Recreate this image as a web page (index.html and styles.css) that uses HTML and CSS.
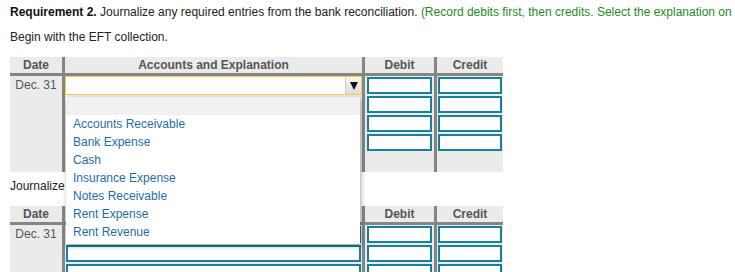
FILE: index.html
```html
<!DOCTYPE html>
<html>
<head>
<meta charset="utf-8">
<link rel="stylesheet" href="styles.css">
</head>
<body>
<div class="page">
  <p class="title"><b>Requirement 2.</b> Journalize any required entries from the bank reconciliation. <span class="hint">(Record debits first, then credits. Select the explanation on the last line of the journal entry table.)</span></p>
  <p class="begin">Begin with the EFT collection.</p>

  <div class="jt first">
    <div class="jt-head">
      <div class="c date">Date</div>
      <div class="c acct">Accounts and Explanation</div>
      <div class="c dr">Debit</div>
      <div class="c cr">Credit</div>
    </div>
    <div class="jt-body">
      <div class="col date"><div class="dtext">Dec. 31</div></div>
      <div class="col acct">
        <div class="select-wrap">
          <div class="select"><span class="arrow-btn"><span class="tri"></span></span></div>
          <div class="dropdown">
            <div class="opt blank"></div>
            <div class="opt">Accounts Receivable</div>
            <div class="opt">Bank Expense</div>
            <div class="opt">Cash</div>
            <div class="opt">Insurance Expense</div>
            <div class="opt">Notes Receivable</div>
            <div class="opt">Rent Expense</div>
            <div class="opt">Rent Revenue</div>
          </div>
        </div>
      </div>
      <div class="col dr">
        <div class="inp"></div><div class="inp"></div><div class="inp"></div><div class="inp"></div>
      </div>
      <div class="col cr">
        <div class="inp"></div><div class="inp"></div><div class="inp"></div><div class="inp"></div>
      </div>
    </div>
  </div>

  <p class="jz">Journalize the service charge.</p>

  <div class="jt second">
    <div class="jt-head">
      <div class="c date">Date</div>
      <div class="c acct">Accounts and Explanation</div>
      <div class="c dr">Debit</div>
      <div class="c cr">Credit</div>
    </div>
    <div class="jt-body">
      <div class="col date"><div class="dtext">Dec. 31</div></div>
      <div class="col acct">
        <div class="inp"></div><div class="inp"></div><div class="inp"></div>
      </div>
      <div class="col dr">
        <div class="inp"></div><div class="inp"></div><div class="inp"></div>
      </div>
      <div class="col cr">
        <div class="inp"></div><div class="inp"></div><div class="inp"></div>
      </div>
    </div>
  </div>
</div>
</body>
</html>
```

FILE: styles.css
```css
html, body {
  margin: 0;
  padding: 0;
  background: #fff;
  overflow: hidden;
}
body {
  font-family: "Liberation Sans", Arial, sans-serif;
  font-size: 12px;
  line-height: 16px;
  color: #222;
}
.page {
  padding: 4px 0 0 10px;
  width: 725px;
  overflow: hidden;
}
p {
  margin: 0;
}
.title {
  white-space: nowrap;
  overflow: hidden;
}
.title b {
  font-weight: bold;
  color: #111;
}
.hint {
  color: #1e8a1e;
}
.begin {
  margin-top: 9px;
}
.jz {
  margin-top: 6px;
}
.jt {
  width: 493px;
}
.jt.first {
  margin-top: 12px;
}
.jt.second {
  margin-top: 12px;
}
.jt-head {
  display: flex;
  height: 16px;
  background: #ebebeb;
  border-bottom: 3px solid #858585;
  color: #555;
  font-weight: bold;
}
.jt-head .c {
  text-align: center;
  line-height: 16px;
}
.date, .acct, .dr, .cr {
  flex: none;
  box-sizing: border-box;
}
.date { width: 52px; }
.acct { width: 300px; border-left: 3px solid #858585; }
.dr { width: 72px; border-left: 3px solid #858585; }
.cr { width: 69px; border-left: 3px solid #858585; }

.jt-body {
  display: flex;
  background: #ebebeb;
}
.first .jt-body {
  height: 96px;
}
.second .jt-body {
  height: 80px;
}
.col {
  display: flex;
  flex-direction: column;
  gap: 2px;
  padding-top: 1px;
}
.dtext {
  color: #555;
  text-align: center;
  line-height: 17px;
}
.col.dr { padding-left: 2px; padding-right: 2px; }
.col.cr { padding-left: 1px; padding-right: 1px; }
.col.acct { padding-left: 1px; padding-right: 1px; }
.first .col.acct { padding: 0; }
.inp {
  height: 17px;
  background: #fff;
  border: 2px solid #17809b;
  box-sizing: border-box;
}
.select-wrap {
  position: relative;
}
.select {
  height: 19px;
  box-sizing: border-box;
  background: #fff;
  border: 1px solid #f0cf4a;
  display: flex;
  justify-content: flex-end;
}
.arrow-btn {
  width: 16px;
  height: 17px;
  box-sizing: border-box;
  background: linear-gradient(#f6f6f6, #dcdcdc);
  border-left: 1px solid #cfcfcf;
  display: flex;
  align-items: center;
  justify-content: center;
}
.tri {
  width: 0;
  height: 0;
  border-left: 4px solid transparent;
  border-right: 4px solid transparent;
  border-top: 8px solid #111;
}
.dropdown {
  position: absolute;
  top: 21px;
  left: 1px;
  width: 294px;
  height: 147px;
  background: #fff;
  box-shadow: 1px 2px 5px rgba(0, 0, 0, 0.35);
  z-index: 10;
}
.opt {
  height: 18px;
  line-height: 18px;
  padding-left: 7px;
  color: #1f6ea8;
  white-space: nowrap;
}
.opt.blank {
  background: #f1f1f1;
}
```
